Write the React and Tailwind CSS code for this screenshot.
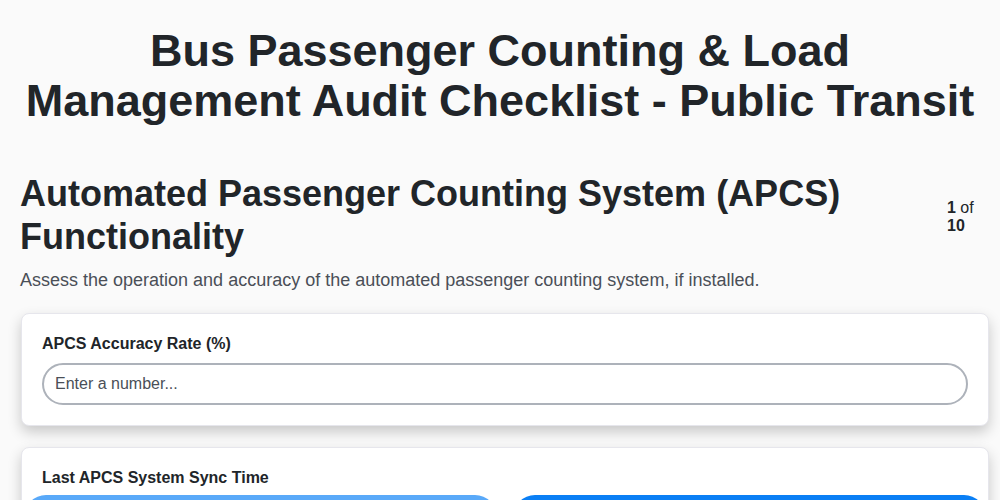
export default function App() {
  return (
    <div className="min-h-screen bg-[#fafafa] px-5 pt-[26px] font-['Liberation_Sans',Arial,sans-serif] text-[#212529]">
      <h1 className="text-center text-[45px] font-bold leading-[50px]">
        Bus Passenger Counting &amp; Load Management Audit Checklist - Public Transit
      </h1>

      <div className="mt-[46px] flex items-start justify-between gap-4">
        <h2 className="flex-1 text-[36px] font-bold leading-[43px]">
          Automated Passenger Counting System (APCS) Functionality
        </h2>
        <div className="mt-[27px] w-[33px] shrink-0 text-base leading-[18px]">
          <span className="font-bold">1</span> of <span className="font-bold">10</span>
        </div>
      </div>

      <p className="mt-[10px] text-lg leading-[24px] text-[#4a4f57]">
        Assess the operation and accuracy of the automated passenger counting system, if installed.
      </p>

      <div className="-mr-[9px] ml-px mt-[21px] rounded-lg border border-[#e6e6ec] bg-white px-[20px] pb-[20px] pt-[20px] shadow-[0_6px_14px_rgba(0,0,0,0.2)]">
        <label className="block text-base font-bold leading-[20px]">APCS Accuracy Rate (%)</label>
        <input
          type="text"
          placeholder="Enter a number..."
          className="mt-[9px] h-[42px] w-full rounded-full border-2 border-[#adb2ba] bg-white px-[11px] text-base text-[#333] placeholder:text-[#4a4f57] outline-none"
        />
      </div>

      <div className="-mr-[9px] ml-px mt-[21px] rounded-lg border border-[#e6e6ec] bg-white px-[20px] pb-[20px] pt-[20px] shadow-[0_6px_14px_rgba(0,0,0,0.2)]">
        <label className="block text-base font-bold leading-[20px]">Last APCS System Sync Time</label>
        <div className="-mx-[18px] mt-[7px] grid grid-cols-2 gap-4">
          <button className="h-[44px] rounded-full bg-[#59a9f9] text-base font-bold text-white">Now</button>
          <button className="h-[44px] rounded-full bg-[#0a7ff5] text-base font-bold text-white">Pick a time</button>
        </div>
      </div>
    </div>
  );
}
